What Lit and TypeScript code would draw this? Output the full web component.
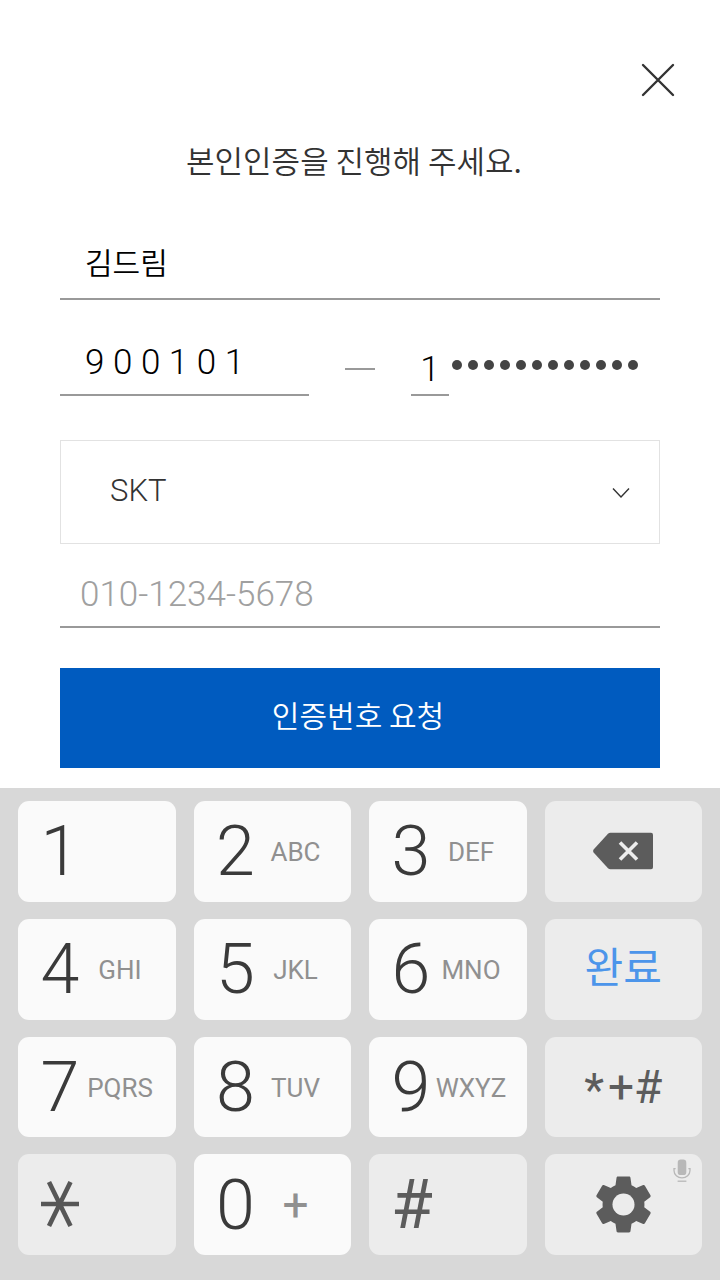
import { LitElement, html, css, nothing } from "lit";
import { customElement, property } from "lit/decorators.js";

const closeIcon = html`<svg width="36" height="36" viewBox="0 0 36 36" aria-hidden="true">
  <path d="M3 3 33 33M33 3 3 33" fill="none" stroke="#333" stroke-width="2.4" stroke-linecap="round" />
</svg>`;

const backspaceIcon = html`<svg width="60" height="38" viewBox="0 0 60 38" aria-hidden="true">
  <path
    d="M17.5 0.8H58Q60 0.8 60 2.8V35.2Q60 37.2 58 37.2H17.5Q16 37.2 15 36.2L0.6 20.4Q-0.4 19 0.6 17.6L15 1.8Q16 0.8 17.5 0.8Z"
    fill="#5c5c5c"
  />
  <path d="M27 10.4 44 27.6M44 10.4 27 27.6" fill="none" stroke="#ececec" stroke-width="3.6" />
</svg>`;

const starIcon = html`<svg width="40" height="50" viewBox="0 0 40 50" aria-hidden="true">
  <path d="M1 24H39M9 2 30.5 46M30.5 2 9 46" fill="none" stroke="#565656" stroke-width="4.6" />
</svg>`;

const gearIcon = html`<svg width="67" height="67" viewBox="0 0 24 24" aria-hidden="true">
  <path
    fill="#5c5c5c"
    d="M19.43 12.98c.04-.32.07-.64.07-.98s-.03-.66-.07-.98l2.11-1.65c.19-.15.24-.42.12-.64l-2-3.46c-.12-.22-.39-.3-.61-.22l-2.49 1c-.52-.4-1.08-.73-1.69-.98l-.38-2.65C14.46 2.18 14.25 2 14 2h-4c-.25 0-.46.18-.49.42l-.38 2.65c-.61.25-1.17.59-1.69.98l-2.49-1c-.23-.09-.49 0-.61.22l-2 3.46c-.13.22-.07.49.12.64l2.11 1.65c-.04.32-.07.65-.07.98s.03.66.07.98l-2.11 1.65c-.19.15-.24.42-.12.64l2 3.46c.12.22.39.3.61.22l2.49-1c.52.4 1.08.73 1.69.98l.38 2.65c.03.24.24.42.49.42h4c.25 0 .46-.18.49-.42l.38-2.65c.61-.25 1.17-.59 1.69-.98l2.49 1c.23.09.49 0 .61-.22l2-3.46c.12-.22.07-.49-.12-.64l-2.11-1.65z"
  />
  <circle cx="12" cy="12" r="3.95" fill="#ececec" />
</svg>`;

const micIcon = html`<svg class="mic" width="18" height="24" viewBox="0 0 18 24" aria-hidden="true">
  <rect x="4.7" y="0.5" width="8.6" height="15.6" rx="3.2" fill="#b8b8b8" />
  <path d="M2.6 9.6H1V11.5A8 7.3 0 0 0 17 11.5V9.6H15.4" fill="none" stroke="#b8b8b8" stroke-width="1.3" />
  <path d="M4.6 22.2H13.4" stroke="#b8b8b8" stroke-width="1.3" />
</svg>`;

@customElement("pad-key")
class PadKey extends LitElement {
  @property() digit = "";
  @property() letters = "";

  static styles = css`
    :host {
      display: block;
      min-width: 0;
    }
    .key {
      display: grid;
      grid-template-columns: 40px 80px;
      align-items: center;
      justify-items: center;
      box-sizing: border-box;
      width: 100%;
      height: 100%;
      margin: 0;
      padding: 0 0 0 22px;
      border: 0;
      border-radius: 11px;
      background: #fafafa;
      font-family: Roboto, "Noto Sans CJK KR", sans-serif;
      color: #3a3a3a;
    }
    .digit {
      font-size: 70px;
      line-height: 80px;
      font-weight: 300;
    }
    .letters {
      padding-top: 2px;
      font-size: 26px;
      line-height: 32px;
      color: #909090;
    }
    .plus {
      padding: 0;
      font-size: 46px;
    }
  `;

  render() {
    return html`<button class="key" type="button">
      <span class="digit">${this.digit}</span>
      ${this.letters
        ? html`<span class="letters ${this.letters === "+" ? "plus" : ""}">${this.letters}</span>`
        : nothing}
    </button>`;
  }
}

@customElement("number-pad")
class NumberPad extends LitElement {
  static styles = css`
    :host {
      display: grid;
      grid-template-columns: repeat(4, minmax(0, 1fr));
      grid-template-rows: repeat(4, minmax(96px, 1fr));
      gap: 17px 18px;
      box-sizing: border-box;
      padding: 13px 18px 25px;
      background: #d8d8d8;
    }
    .fn {
      position: relative;
      display: flex;
      align-items: center;
      justify-content: center;
      min-width: 0;
      margin: 0;
      padding: 0;
      border: 0;
      border-radius: 11px;
      background: #ececec;
      font-family: Roboto, "Noto Sans CJK KR", sans-serif;
      color: #5c5c5c;
    }
    .left {
      justify-content: flex-start;
      padding-left: 22px;
    }
    .done {
      color: #4c95ea;
      font-size: 42px;
      line-height: 48px;
      font-weight: 400;
    }
    .symbols {
      gap: 4px;
      font-size: 46px;
      line-height: 52px;
    }
    .low {
      padding-top: 6px;
    }
    .hash {
      font-size: 68px;
      line-height: 80px;
      font-weight: 400;
      color: #5c5c5c;
    }
    .mic {
      position: absolute;
      top: 5px;
      right: 11px;
    }
  `;

  render() {
    return html`
      <pad-key digit="1"></pad-key>
      <pad-key digit="2" letters="ABC"></pad-key>
      <pad-key digit="3" letters="DEF"></pad-key>
      <button class="fn" type="button" aria-label="지우기">${backspaceIcon}</button>
      <pad-key digit="4" letters="GHI"></pad-key>
      <pad-key digit="5" letters="JKL"></pad-key>
      <pad-key digit="6" letters="MNO"></pad-key>
      <button class="fn done" type="button">완료</button>
      <pad-key digit="7" letters="PQRS"></pad-key>
      <pad-key digit="8" letters="TUV"></pad-key>
      <pad-key digit="9" letters="WXYZ"></pad-key>
      <button class="fn symbols" type="button"><span class="low">*</span><span>+#</span></button>
      <button class="fn left" type="button" aria-label="별표">${starIcon}</button>
      <pad-key digit="0" letters="+"></pad-key>
      <button class="fn left hash" type="button">#</button>
      <button class="fn" type="button" aria-label="설정">${gearIcon}${micIcon}</button>
    `;
  }
}

@customElement("app-root")
class AppRoot extends LitElement {
  static styles = css`
    :host {
      display: flex;
      flex-direction: column;
      min-height: 100vh;
      background: #fff;
      color: #333;
      font-family: "Noto Sans CJK KR", sans-serif;
      font-weight: 350;
    }
    .top {
      display: flex;
      justify-content: flex-end;
      padding: 62px 44px 0;
    }
    .close {
      display: flex;
      margin: 0;
      padding: 0;
      border: 0;
      background: none;
    }
    .title {
      margin: 38px 0 0;
      padding-right: 12px;
      text-align: center;
      font-size: 31px;
      line-height: 48px;
      font-weight: 350;
    }
    .form {
      display: flex;
      flex-direction: column;
      padding: 44px 60px 20px;
    }
    .field {
      box-sizing: border-box;
      width: 100%;
      min-width: 0;
      height: 72px;
      margin: 0;
      padding: 0 25px 4px;
      border: 0;
      border-bottom: 2px solid #999;
      border-radius: 0;
      outline: 0;
      background: none;
      color: #000;
      font: inherit;
      font-size: 30px;
    }
    .number {
      padding: 6px 25px 0;
      font-family: Roboto, "Noto Sans CJK KR", sans-serif;
      font-size: 35px;
      font-weight: 300;
    }
    .phone::placeholder {
      color: #a0a0a0;
      opacity: 1;
    }
    .phone {
      padding: 6px 20px 0;
    }
    .resident {
      display: grid;
      grid-template-columns: minmax(0, 249fr) 36fr 30px 36fr 38px auto;
      align-items: end;
      margin: 24px 0 44px;
    }
    .dash {
      grid-column: 3;
      height: 2px;
      margin-bottom: 26px;
      background: #999;
    }
    .first {
      grid-column: 5;
      height: 60px;
      padding: 8px 0 0;
      text-align: center;
    }
    .dots {
      display: flex;
      gap: 6px;
      padding: 0 22px 26px 3px;
    }
    .dot {
      width: 10px;
      height: 10px;
      border-radius: 50%;
      background: #444;
    }
    .carrier {
      display: grid;
      align-items: center;
      margin-bottom: 12px;
    }
    .select {
      grid-area: 1 / 1;
      appearance: none;
      box-sizing: border-box;
      width: 100%;
      height: 104px;
      margin: 0;
      padding: 0 49px 4px;
      border: 1px solid #e2e2e2;
      border-radius: 0;
      background: #fff;
      color: #333;
      font-family: Roboto, "Noto Sans CJK KR", sans-serif;
      font-size: 31px;
      font-weight: 300;
    }
    .chevron {
      grid-area: 1 / 1;
      justify-self: end;
      margin-right: 30px;
      pointer-events: none;
    }
    .submit {
      height: 100px;
      margin: 40px 0 0;
      padding: 0 4px 8px 0;
      border: 0;
      background: #005bbf;
      color: #fff;
      font: inherit;
      font-size: 30px;
    }
    .pad {
      flex: 1;
    }
  `;

  render() {
    return html`
      <header class="top">
        <button class="close" type="button" aria-label="닫기">${closeIcon}</button>
      </header>
      <h1 class="title">본인인증을 진행해 주세요.</h1>
      <form class="form">
        <input class="field" type="text" aria-label="이름" .value=${"김드림"} />
        <div class="resident">
          <input class="field number" type="text" inputmode="numeric" aria-label="생년월일" .value=${"9 0 0 1 0 1"} />
          <span class="dash"></span>
          <input class="field number first" type="text" inputmode="numeric" aria-label="주민등록번호 뒷자리" .value=${"1"} />
          <span class="dots" aria-hidden="true">
            ${Array.from({ length: 12 }, () => html`<span class="dot"></span>`)}
          </span>
        </div>
        <div class="carrier">
          <select class="select" aria-label="통신사">
            <option>SKT</option>
          </select>
          <svg class="chevron" width="18" height="12" viewBox="0 0 18 12" aria-hidden="true">
            <path d="M1 2.5 9 11 17 2.5" fill="none" stroke="#333" stroke-width="1.4" />
          </svg>
        </div>
        <input class="field number phone" type="tel" aria-label="휴대폰 번호" placeholder="010-1234-5678" />
        <button class="submit" type="button">인증번호 요청</button>
      </form>
      <number-pad class="pad"></number-pad>
    `;
  }
}
